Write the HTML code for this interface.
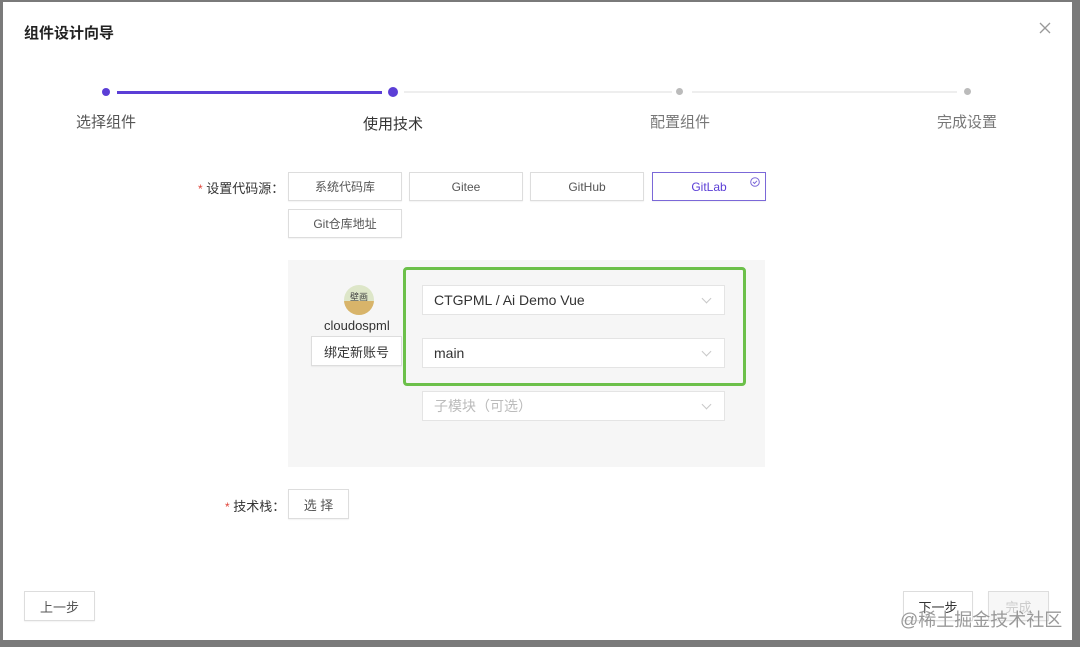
<!DOCTYPE html>
<html><head><meta charset="utf-8"><style>
*{box-sizing:border-box;margin:0;padding:0}
body{width:1080px;height:647px;background:#7a7a7a;position:relative;overflow:hidden;font-family:"Liberation Sans","Noto Sans CJK SC",sans-serif;color:#333}
.m{position:absolute;left:3px;top:2px;width:1069px;height:638px;background:#fff}
.a{position:absolute}
.t{left:24px;top:22px;font-size:15px;font-weight:bold;color:#222}
.dot{border-radius:50%;position:absolute}
.lbl{position:absolute;font-size:15px;color:#555;white-space:nowrap}
.btn{position:absolute;border:1px solid #ddd;background:#fff;font-size:12px;color:#555;display:flex;align-items:center;justify-content:center;box-shadow:0 1px 1px rgba(0,0,0,.05)}
.sel{position:absolute;left:422px;width:303px;height:30px;background:#fff;border:1px solid #e4e4e4;font-size:14px;color:#333;padding-left:11px;line-height:28px}
.sel:after{content:"";position:absolute;right:14px;top:9px;width:6px;height:6px;border-right:1px solid #c8c8c8;border-bottom:1px solid #c8c8c8;transform:rotate(45deg)}
.req{color:#e0453a;font-size:12px}
</style></head><body>
<div class="m"></div>
<div class="a t">组件设计向导</div>
<svg class="a" style="left:1039px;top:22px" width="12" height="12"><path d="M1 1L11 11M11 1L1 11" stroke="#999" stroke-width="1.3"/></svg>
<!-- steps -->
<div class="dot" style="left:102px;top:88px;width:8px;height:8px;background:#5b3ed6"></div>
<div class="a" style="left:117px;top:91px;width:265px;height:3px;background:#5b3ed6"></div>
<div class="dot" style="left:388px;top:87px;width:10px;height:10px;background:#5b3ed6"></div>
<div class="a" style="left:404px;top:91px;width:268px;height:2px;background:#eee"></div>
<div class="dot" style="left:676px;top:88px;width:7px;height:7px;background:#bbb"></div>
<div class="a" style="left:692px;top:91px;width:265px;height:2px;background:#eee"></div>
<div class="dot" style="left:964px;top:88px;width:7px;height:7px;background:#bbb"></div>
<div class="lbl" style="left:76px;top:111px">选择组件</div>
<div class="lbl" style="left:363px;top:113px;color:#333">使用技术</div>
<div class="lbl" style="left:650px;top:111px;color:#777">配置组件</div>
<div class="lbl" style="left:937px;top:111px;color:#777">完成设置</div>
<!-- source -->
<div class="a" style="left:198px;top:178px;font-size:13px;color:#333"><span class="req">*</span> 设置代码源：</div>
<div class="btn" style="left:288px;top:172px;width:114px;height:29px">系统代码库</div>
<div class="btn" style="left:409px;top:172px;width:114px;height:29px">Gitee</div>
<div class="btn" style="left:530px;top:172px;width:114px;height:29px">GitHub</div>
<div class="btn" style="left:652px;top:172px;width:114px;height:29px;border-color:#7b68d8;color:#5b3ed6">GitLab<svg style="position:absolute;right:5px;top:4px" width="10" height="10"><circle cx="5" cy="5" r="4.3" fill="none" stroke="#7b68d8"/><path d="M3 5L4.5 6.5L7 3.8" fill="none" stroke="#7b68d8"/></svg></div>
<div class="btn" style="left:288px;top:209px;width:114px;height:29px">Git仓库地址</div>
<!-- panel -->
<div class="a" style="left:288px;top:260px;width:477px;height:207px;background:#f6f6f6"></div>
<div class="dot" style="left:344px;top:285px;width:30px;height:30px;background:#dde6c8;overflow:hidden"><div style="position:absolute;left:0;top:16px;width:30px;height:14px;background:#d8b46a"></div><div style="position:absolute;left:6px;top:5px;font-size:9px;color:#444">壁画</div></div>
<div class="a" style="left:324px;top:318px;font-size:13px;color:#333">cloudospml</div>
<div class="btn" style="left:311px;top:336px;width:91px;height:30px;font-size:13px;color:#333">绑定新账号</div>
<div class="sel" style="top:285px">CTGPML / Ai Demo Vue</div>
<div class="sel" style="top:338px">main</div>
<div class="sel" style="top:391px;color:#bbb">子模块（可选）</div>
<div class="a" style="left:403px;top:267px;width:343px;height:119px;border:3px solid #6cc04a;border-radius:4px"></div>
<!-- tech -->
<div class="a" style="left:225px;top:496px;font-size:13px;color:#333"><span class="req">*</span> 技术栈：</div>
<div class="btn" style="left:288px;top:489px;width:61px;height:30px;font-size:13px">选 择</div>
<!-- footer -->
<div class="btn" style="left:24px;top:591px;width:71px;height:30px;font-size:13px">上一步</div>
<div class="btn" style="left:903px;top:591px;width:70px;height:30px;font-size:13px;color:#333">下一步</div>
<div class="btn" style="left:988px;top:591px;width:61px;height:30px;font-size:13px;color:#ccc;background:#f7f7f7">完成</div>
<div class="a" style="left:900px;top:606px;font-size:18px;color:rgba(110,110,110,.7);text-shadow:0 0 1px #fff">@稀土掘金技术社区</div>
</body></html>
